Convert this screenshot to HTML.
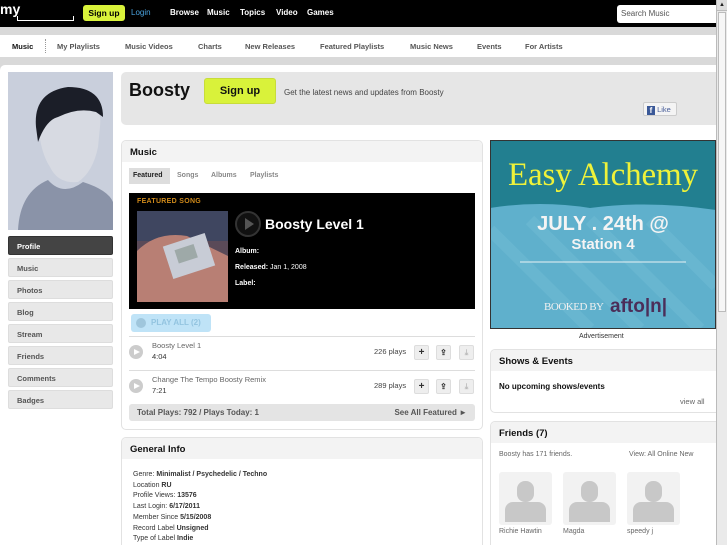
<!DOCTYPE html>
<html style="width:727px;height:545px;overflow:hidden"><head><meta charset="utf-8"><style>
*{box-sizing:border-box;margin:0;padding:0}
body{width:727px;height:545px;overflow:hidden;background:#d9d9d9;font-family:"Liberation Sans",sans-serif;position:relative;color:#222}
.a{position:absolute}
.top{left:0;top:0;width:716px;height:27px;background:#000}
.top span{position:absolute;top:8px;color:#fff;font-size:8px;font-weight:bold}
.nav{left:0;top:35px;width:716px;height:22px;background:#fff}
.nav span{position:absolute;top:7px;font-size:7.5px;color:#555;font-weight:bold}
.main{left:0;top:65px;width:716px;height:480px;background:#fff;border-radius:5px 0 0 0}
.box{background:#fff;border:1px solid #e2e2e2;border-radius:5px;overflow:hidden}
.bh{background:#f3f3f3;height:21px;padding:6px 8px;font-size:9.5px;font-weight:bold;color:#111}
.side{left:8px;width:105px;height:19px;background:#e8e8e8;border:1px solid #ddd;border-radius:2px;font-size:7.5px;font-weight:bold;color:#555;padding:5px 8px}
.sb{left:716px;top:0;width:11px;height:545px;background:#eaeaea;border-left:1px solid #bbb}
.t{font-size:7.5px;color:#666}
.btn{width:15px;height:15px;background:#eee;border:1px solid #ddd;border-radius:2px;font-size:10px;text-align:center;line-height:13px;font-weight:bold;color:#333}
.pl{width:14px;height:14px;border-radius:50%;background:#ccc}
.pl:after{content:"";position:absolute;left:5px;top:3.5px;border-left:6px solid #fff;border-top:3.5px solid transparent;border-bottom:3.5px solid transparent}
.fr{width:53px;height:53px;background:#f2f2f2;border-radius:3px}
.fr:before{content:"";position:absolute;left:18px;top:9px;width:17px;height:21px;border-radius:8px;background:#c8c8c8}
.fr:after{content:"";position:absolute;left:6px;top:30px;width:41px;height:20px;border-radius:8px 8px 0 0;background:#c8c8c8}
</style></head><body>
<div class="a top">
<span style="left:0;top:1px;font-size:14px;font-weight:bold">my</span>
<div class="a" style="left:17px;top:16px;width:57px;height:5px;border:1.5px solid #fff;border-top:none"></div>
<div class="a" style="left:83px;top:5px;width:42px;height:16px;background:#d9f23a;border-radius:3px;font-size:8.5px;font-weight:bold;color:#000;text-align:center;line-height:16px">Sign up</div>
<span style="left:131px;color:#4aa3df;font-weight:normal">Login</span>
<span style="left:170px">Browse</span><span style="left:207px">Music</span><span style="left:240px">Topics</span><span style="left:276px">Video</span><span style="left:307px">Games</span>
<div class="a" style="left:617px;top:5px;width:99px;height:18px;background:#fff;border-radius:3px 0 0 3px;font-size:8px;color:#555;padding:4px 4px">Search Music</div>
</div>
<div class="a nav">
<span style="left:12px;color:#111">Music</span>
<div class="a" style="left:45px;top:4px;height:14px;border-left:1px dotted #999"></div>
<span style="left:57px">My Playlists</span><span style="left:125px">Music Videos</span><span style="left:198px">Charts</span><span style="left:245px">New Releases</span><span style="left:320px">Featured Playlists</span><span style="left:410px">Music News</span><span style="left:477px">Events</span><span style="left:525px">For Artists</span>
</div>
<div class="a main"></div>
<svg class="a" style="left:8px;top:72px" width="105" height="158"><rect width="105" height="158" fill="#c9cfdc"/><path d="M30 50 Q35 15 65 18 Q95 22 92 55 L90 75 Q85 100 70 110 Q50 112 42 95 Q32 80 30 50Z" fill="#d7dae2"/><path d="M28 55 Q25 20 60 15 Q95 15 95 45 L88 40 Q70 35 50 45 Q38 48 30 70Z" fill="#1b1e28"/><path d="M10 158 Q12 120 40 108 Q55 125 75 110 Q100 118 105 130 L105 158Z" fill="#8a93a8"/></svg>
<div class="a side" style="top:236px;background:#444;color:#fff;border-color:#333">Profile</div>
<div class="a side" style="top:258px">Music</div>
<div class="a side" style="top:280px">Photos</div>
<div class="a side" style="top:302px">Blog</div>
<div class="a side" style="top:324px">Stream</div>
<div class="a side" style="top:346px">Friends</div>
<div class="a side" style="top:368px">Comments</div>
<div class="a side" style="top:390px">Badges</div>

<div class="a" style="left:121px;top:72px;width:595px;height:53px;background:#e6e6e6;border-radius:5px 0 0 5px"></div>
<div class="a" style="left:129px;top:80px;font-size:18px;font-weight:bold;color:#111">Boosty</div>
<div class="a" style="left:204px;top:78px;width:72px;height:26px;background:#d9f23a;border:1px solid #c8dc3a;border-radius:3px;font-size:11px;font-weight:bold;text-align:center;line-height:24px;color:#111">Sign up</div>
<div class="a t" style="left:284px;top:88px;font-size:8px;color:#444">Get the latest news and updates from Boosty</div>
<div class="a" style="left:643px;top:102px;width:34px;height:14px;background:#f4f4f4;border:1px solid #ccc;border-radius:2px;font-size:7.5px;color:#4a5f9a;padding:2px 3px"><span style="display:inline-block;width:8px;height:9px;background:#3b5998;color:#fff;font-size:8px;font-weight:bold;line-height:10px;text-align:center;vertical-align:-1px">f</span> Like</div>

<div class="a box" style="left:121px;top:140px;width:362px;height:290px"><div class="bh">Music</div></div>
<div class="a" style="left:129px;top:168px;width:41px;height:16px;background:#ddd;font-size:7px;font-weight:bold;padding:4px 4px;color:#222">Featured</div>
<div class="a t" style="left:177px;top:172px;font-size:7px;font-weight:bold;color:#888">Songs</div>
<div class="a t" style="left:211px;top:172px;font-size:7px;font-weight:bold;color:#888">Albums</div>
<div class="a t" style="left:250px;top:172px;font-size:7px;font-weight:bold;color:#888">Playlists</div>
<div class="a" style="left:129px;top:193px;width:346px;height:116px;background:#000"></div>
<div class="a" style="left:137px;top:198px;font-size:7px;font-weight:bold;color:#d08a1a;letter-spacing:.3px">FEATURED SONG</div>
<svg class="a" style="left:137px;top:211px" width="91" height="91"><rect width="91" height="91" fill="#5a4a58"/><rect x="0" y="0" width="91" height="30" fill="#3f4660"/><path d="M0 40 Q20 20 50 25 L91 45 L91 91 L0 91Z" fill="#b87f74"/><rect x="30" y="28" width="44" height="34" fill="#c8ccd6" transform="rotate(-18 52 45)"/><rect x="40" y="35" width="20" height="14" fill="#9ea9a8" transform="rotate(-18 52 45)"/></svg>
<div class="a" style="left:235px;top:211px;width:26px;height:26px;border-radius:50%;border:2px solid #333;background:#111"></div>
<div class="a" style="left:245px;top:218px;border-left:9px solid #555;border-top:6px solid transparent;border-bottom:6px solid transparent"></div>
<div class="a" style="left:265px;top:216px;font-size:14px;font-weight:bold;color:#fff">Boosty Level 1</div>
<div class="a" style="left:235px;top:248px;font-size:7px;color:#fff;font-weight:bold">Album:</div>
<div class="a" style="left:235px;top:264px;font-size:7px;color:#fff"><b>Released:</b> Jan 1, 2008</div>
<div class="a" style="left:235px;top:280px;font-size:7px;color:#fff;font-weight:bold">Label:</div>
<div class="a" style="left:131px;top:314px;width:80px;height:18px;background:#bfe3f7;border-radius:3px;font-size:8px;font-weight:bold;padding:4px 0 0 20px;color:#93c4e0">PLAY ALL (2)</div>
<div class="a" style="left:136px;top:318px;width:10px;height:10px;border-radius:50%;background:#9fc6dc"></div>
<div class="a" style="left:129px;top:336px;width:346px;border-top:1px solid #ddd"></div>
<div class="a pl" style="left:129px;top:345px"></div>
<div class="a t" style="left:152px;top:341px">Boosty Level 1</div><div class="a t" style="left:152px;top:352px;color:#333">4:04</div>
<div class="a t" style="left:374px;top:347px;color:#444">226 plays</div>
<div class="a btn" style="left:414px;top:345px">+</div><div class="a btn" style="left:436px;top:345px;font-size:8px">⇪</div><div class="a btn" style="left:459px;top:345px;color:#bbb;font-size:8px">⤓</div>
<div class="a" style="left:129px;top:370px;width:346px;border-top:1px solid #ddd"></div>
<div class="a pl" style="left:129px;top:379px"></div>
<div class="a t" style="left:152px;top:375px">Change The Tempo Boosty Remix</div><div class="a t" style="left:152px;top:386px;color:#333">7:21</div>
<div class="a t" style="left:374px;top:381px;color:#444">289 plays</div>
<div class="a btn" style="left:414px;top:379px">+</div><div class="a btn" style="left:436px;top:379px;font-size:8px">⇪</div><div class="a btn" style="left:459px;top:379px;color:#bbb;font-size:8px">⤓</div>
<div class="a" style="left:129px;top:404px;width:346px;height:17px;background:#e4e4e4;border-radius:3px;font-size:8px;font-weight:bold;color:#555;padding:4px 8px">Total Plays: 792 / Plays Today: 1<span style="float:right">See All Featured ►</span></div>

<div class="a box" style="left:121px;top:437px;width:362px;height:115px"><div class="bh">General Info</div></div>
<div class="a" style="left:133px;top:470px;font-size:7px;line-height:10.7px;color:#333">Genre: <b>Minimalist / Psychedelic / Techno</b><br>Location <b>RU</b><br>Profile Views: <b>13576</b><br>Last Login: <b>6/17/2011</b><br>Member Since <b>5/15/2008</b><br>Record Label <b>Unsigned</b><br>Type of Label <b>Indie</b></div>

<svg class="a" style="left:490px;top:140px" width="226" height="189"><rect width="226" height="189" fill="#5fb0cc"/><path d="M0 0H226V70Q160 60 100 68Q50 60 0 68Z" fill="#227f90"/><g stroke="#6ebad3" stroke-width="12" opacity=".6"><path d="M0 90L100 189M40 80L150 189M100 80L210 189M160 80L226 146"/></g><rect x="0.5" y="0.5" width="225" height="188" fill="none" stroke="#333"/>
<text x="113" y="45" text-anchor="middle" font-family="Liberation Serif,serif" font-size="33" fill="#eef23a" textLength="190">Easy Alchemy</text>
<text x="113" y="90" text-anchor="middle" font-family="Liberation Sans,sans-serif" font-weight="bold" font-size="20" fill="#f4f4f4">JULY . 24th @</text>
<text x="113" y="109" text-anchor="middle" font-family="Liberation Sans,sans-serif" font-weight="bold" font-size="15" fill="#f4f4f4">Station 4</text>
<line x1="30" y1="122" x2="196" y2="122" stroke="#e8f2f4"/>
<text x="54" y="170" font-family="Liberation Serif,serif" font-size="11" fill="#f0f0f0" textLength="60">BOOKED BY</text>
<text x="120" y="172" font-family="Liberation Sans,sans-serif" font-weight="bold" font-size="19" fill="#4b2e59">afto|n|</text></svg>
<div class="a" style="left:579px;top:333px;font-size:7px;color:#333">Advertisement</div>
<div class="a box" style="left:490px;top:349px;width:232px;height:64px"><div class="bh">Shows &amp; Events</div></div>
<div class="a" style="left:499px;top:382px;font-size:8px;font-weight:bold;color:#111">No upcoming shows/events</div>
<div class="a t" style="left:680px;top:397px">view all</div>
<div class="a box" style="left:490px;top:421px;width:232px;height:130px"><div class="bh">Friends (7)</div></div>
<div class="a t" style="left:499px;top:451px;font-size:7px">Boosty has 171 friends.</div>
<div class="a t" style="left:629px;top:451px;font-size:7px">View: All Online New</div>
<div class="a fr" style="left:499px;top:472px"></div><div class="a fr" style="left:563px;top:472px"></div><div class="a fr" style="left:627px;top:472px"></div>
<div class="a t" style="left:499px;top:528px;font-size:7px">Richie Hawtin</div><div class="a t" style="left:563px;top:528px;font-size:7px">Magda</div><div class="a t" style="left:627px;top:528px;font-size:7px">speedy j</div>
<div class="a sb"><div class="a" style="left:0;top:0;width:10px;height:11px;background:#ddd;border-bottom:1px solid #bbb;font-size:6px;text-align:center;line-height:11px">▲</div><div class="a" style="left:1px;top:12px;width:8px;height:300px;background:#f6f6f6;border:1px solid #bbb"></div></div>
</body></html>
